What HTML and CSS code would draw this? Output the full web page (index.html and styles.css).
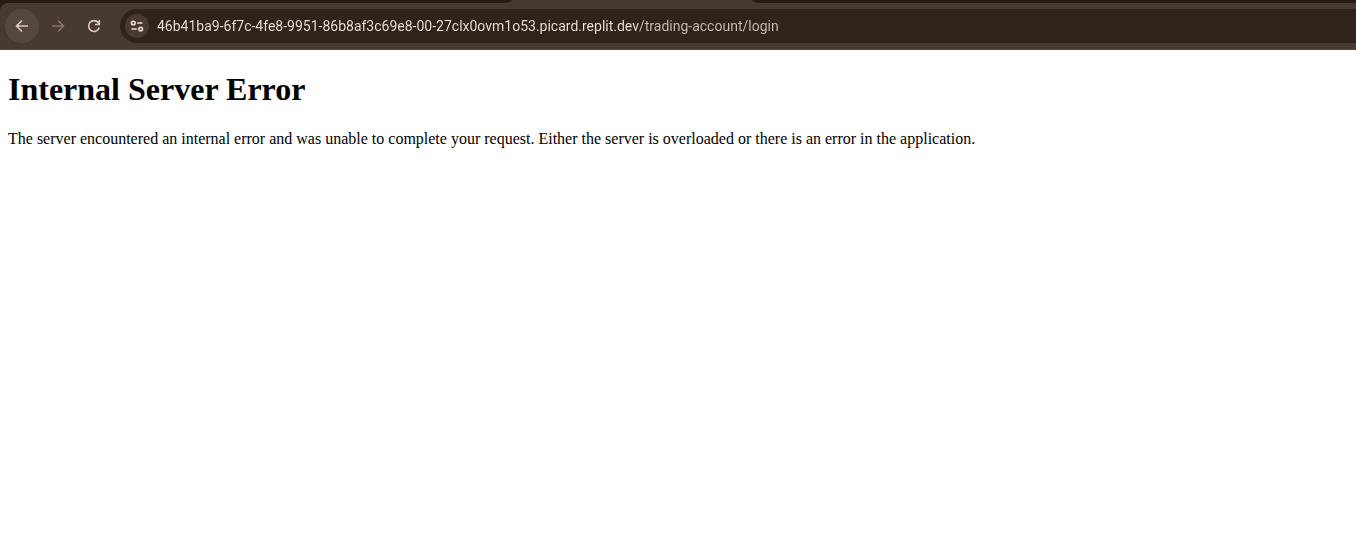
FILE: index.html
```html
<!DOCTYPE html>
<html lang="en">
<head>
<meta charset="utf-8">
<meta name="viewport" content="width=device-width, initial-scale=1">
<title>500 Internal Server Error</title>
<link rel="stylesheet" href="styles.css">
</head>
<body>
<header class="browser">
  <div class="tab-strip"><div class="tab-inactive tab-left"></div><div class="tab-active"></div><div class="tab-inactive tab-right"></div></div>
  <nav class="toolbar" aria-label="Browser toolbar">
    <button class="nav-button is-hovered" type="button" aria-label="Back">
      <svg width="16" height="16" viewBox="0 0 16 16"><path d="M14 8H3M8 2.5 2.5 8 8 13.5"/></svg>
    </button>
    <button class="nav-button is-disabled" type="button" aria-label="Forward" disabled>
      <svg width="16" height="16" viewBox="0 0 16 16"><path d="M2 8h11M8 2.5 13.5 8 8 13.5"/></svg>
    </button>
    <button class="nav-button" type="button" aria-label="Reload">
      <svg width="16" height="16" viewBox="0 0 16 16"><path d="M13.2 9.5A5.4 5.4 0 1 1 12.2 4.6L13.4 6M13.3 2v4.5H9"/></svg>
    </button>
    <div class="address-bar">
      <button class="site-info" type="button" aria-label="View site information">
        <svg width="14" height="14" viewBox="0 0 14 14"><circle cx="3.3" cy="4" r="1.8"/><path d="M7.2 4h5.3M1.5 10h5.3"/><circle cx="10.7" cy="10" r="1.8"/></svg>
      </button>
      <input class="url" type="text" aria-label="Address" spellcheck="false" value="46b41ba9-6f7c-4fe8-9951-86b8af3c69e8-00-27clx0ovm1o53.picard.replit.dev/trading-account/login">
    </div>
  </nav>
</header>
<main class="page">
  <h1 class="title">Internal Server Error</h1>
  <p class="message">The server encountered an internal error and was unable to complete your request. Either the server is overloaded or there is an error in the application.</p>
</main>
</body>
</html>
```
FILE: styles.css
```css
* { box-sizing: border-box; }

body {
  margin: 0;
  background: #fff;
  color: #000;
  font-family: "Liberation Serif", "Times New Roman", serif;
}

.browser { background: #281b14; }

.tab-strip {
  display: flex;
  height: 3px;
  background: #473a32;
}

.tab-inactive { background: #281b14; }
.tab-left { flex: 0 0 512px; border-bottom-right-radius: 8px 3px; }
.tab-active { flex: 0 0 240px; }
.tab-right { flex: 1; border-bottom-left-radius: 8px 3px; }

.toolbar {
  display: flex;
  align-items: center;
  gap: 2px;
  padding: 6px 0 6px 5px;
  background: #473a32;
  border-bottom: 1px solid #54473f;
  border-top-left-radius: 8px;
}

.nav-button,
.site-info {
  display: grid;
  place-items: center;
  flex: none;
  padding: 0;
  border: 0;
  border-radius: 50%;
  background: transparent;
  color: #dfc8bd;
}

.nav-button { width: 34px; height: 34px; }
.is-hovered { background: #54473f; }
.is-disabled { color: #86766d; }

.nav-button svg,
.site-info svg {
  fill: none;
  stroke: currentColor;
  stroke-width: 1.6;
}

.address-bar {
  display: flex;
  flex: 1;
  align-items: center;
  gap: 8px;
  height: 34px;
  margin-left: 7px;
  padding-left: 5px;
  border-radius: 17px 0 0 17px;
  background: #30231b;
}

.site-info {
  width: 24px;
  height: 24px;
  background: #473a32;
  color: #eee0d9;
}

/* The host is bright and the path is dimmed. */
.url {
  flex: 1;
  min-width: 0;
  height: 24px;
  padding: 0;
  border: 0;
  outline: 0;
  background: linear-gradient(to right, #f2e6e0 482px, #c9beb8 482px);
  -webkit-background-clip: text;
  background-clip: text;
  color: #f2e6e0;
  -webkit-text-fill-color: transparent;
  font: 14px/24px Roboto, "Segoe UI", sans-serif;
}

.page { padding: 0 8px; }

.title {
  margin: 0;
  padding: 21px 0;
  font-size: 32px;
  line-height: 37px;
}

.message {
  margin: 0;
  font-size: 16px;
  line-height: 20px;
}
```
